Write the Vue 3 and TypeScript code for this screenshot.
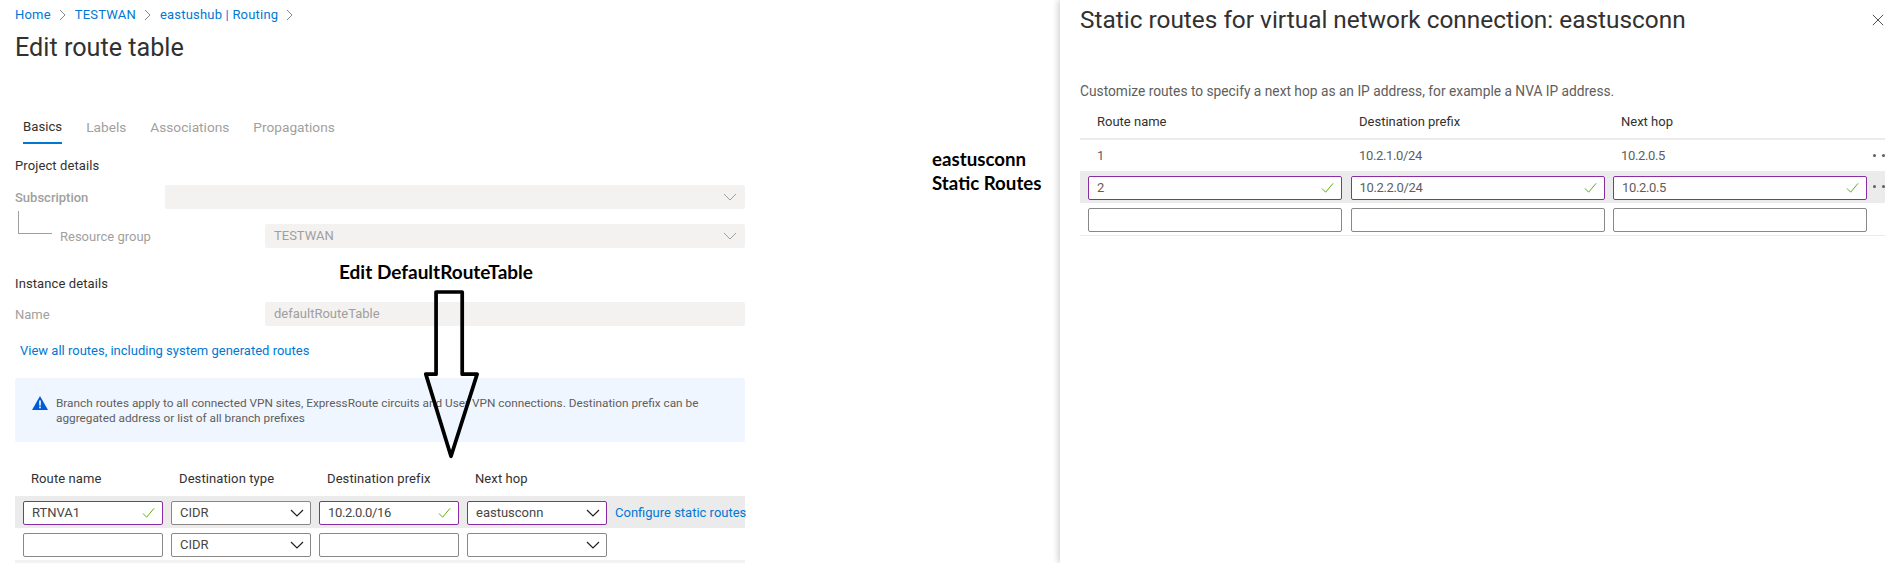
<script setup lang="ts">
const crumbs = ['Home', 'TESTWAN', 'eastushub | Routing']
const tabs = ['Basics', 'Labels', 'Associations', 'Propagations']
const routeHeads = ['Route name', 'Destination type', 'Destination prefix', 'Next hop']
const staticHeads = ['Route name', 'Destination prefix', 'Next hop']
const savedRoute = ['1', '10.2.1.0/24', '10.2.0.5']
const editedRoute = ['2', '10.2.2.0/24', '10.2.0.5']
</script>

<template>
  <div class="page">
    <main class="editor">
      <nav class="crumbs">
        <template v-for="crumb in crumbs" :key="crumb">
          <a>{{ crumb }}</a>
          <svg class="crumb-arrow" viewBox="0 0 7 12"><path d="M1 1l5 5-5 5" /></svg>
        </template>
      </nav>
      <h1>Edit route table</h1>

      <div class="tabs">
        <span v-for="(tab, i) in tabs" :key="tab" class="tab" :class="{ active: i === 0 }">{{ tab }}</span>
      </div>

      <h2 class="project">Project details</h2>
      <div class="form-row subscription">
        <label>Subscription</label>
        <div class="disabled-field">
          <svg class="chevron" viewBox="0 0 14 8"><path d="M1 1l6 6 6-6" /></svg>
        </div>
      </div>
      <div class="form-row resource">
        <label>Resource group</label>
        <div class="disabled-field">
          TESTWAN
          <svg class="chevron" viewBox="0 0 14 8"><path d="M1 1l6 6 6-6" /></svg>
        </div>
      </div>

      <h2 class="instance">Instance details</h2>
      <div class="form-row name">
        <label>Name</label>
        <div class="disabled-field">defaultRouteTable</div>
      </div>

      <a class="all-routes">View all routes, including system generated routes</a>

      <div class="info">
        <svg class="info-icon" viewBox="0 0 16 14">
          <path d="M8 0l8 14H0z" fill="#015cda" />
          <path d="M7.2 4.6h1.6v5H7.2zM7.2 10.6h1.6v1.6H7.2z" fill="#fff" />
        </svg>
        <p>
          Branch routes apply to all connected VPN sites, ExpressRoute circuits and User VPN connections. Destination
          prefix can be aggregated address or list of all branch prefixes
        </p>
      </div>

      <div class="route-head">
        <span v-for="head in routeHeads" :key="head">{{ head }}</span>
      </div>
      <div class="route-row current">
        <div class="box valid">
          RTNVA1
          <svg class="check" viewBox="0 0 14 12"><path d="M1 6.5l4 4L13 1" /></svg>
        </div>
        <div class="box">
          CIDR
          <svg class="chevron dark" viewBox="0 0 14 8"><path d="M1 1l6 6 6-6" /></svg>
        </div>
        <div class="box valid numeric">
          10.2.0.0/16
          <svg class="check" viewBox="0 0 14 12"><path d="M1 6.5l4 4L13 1" /></svg>
        </div>
        <div class="box valid">
          eastusconn
          <svg class="chevron dark" viewBox="0 0 14 8"><path d="M1 1l6 6 6-6" /></svg>
        </div>
        <a class="configure">Configure static routes</a>
      </div>
      <div class="route-row">
        <div class="box"></div>
        <div class="box">
          CIDR
          <svg class="chevron dark" viewBox="0 0 14 8"><path d="M1 1l6 6 6-6" /></svg>
        </div>
        <div class="box"></div>
        <div class="box">
          <svg class="chevron dark" viewBox="0 0 14 8"><path d="M1 1l6 6 6-6" /></svg>
        </div>
      </div>
      <div class="strip"></div>

      <strong class="note-edit">Edit DefaultRouteTable</strong>
      <svg class="big-arrow" viewBox="0 0 60 184">
        <path d="M14 2h28v88h16L30 178 3 90h11z" />
      </svg>
    </main>

    <aside class="note-static">
      <strong>eastusconn</strong>
      <strong>Static Routes</strong>
    </aside>

    <section class="panel">
      <header class="panel-head">
        <h2>Static routes for virtual network connection: eastusconn</h2>
        <svg class="close" viewBox="0 0 14 14"><path d="M1 1l12 12M13 1L1 13" /></svg>
      </header>
      <p class="hint">Customize routes to specify a next hop as an IP address, for example a NVA IP address.</p>

      <div class="static-head">
        <span v-for="head in staticHeads" :key="head">{{ head }}</span>
      </div>
      <div class="static-saved">
        <span v-for="cell in savedRoute" :key="cell">{{ cell }}</span>
        <i class="dots"></i>
      </div>
      <div class="static-row current">
        <div v-for="cell in editedRoute" :key="cell" class="box valid numeric">
          {{ cell }}
          <svg class="check" viewBox="0 0 14 12"><path d="M1 6.5l4 4L13 1" /></svg>
        </div>
        <i class="dots"></i>
      </div>
      <div class="static-row last">
        <div v-for="n in 3" :key="n" class="box"></div>
      </div>
    </section>
  </div>
</template>

<style>
html,
body {
  margin: 0;
  background: #fff;
  overflow: hidden;
}
</style>

<style scoped>
.page {
  display: flex;
  width: 1885px;
  height: 563px;
  overflow: hidden;
  color: #323130;
  font-family: Roboto, 'Liberation Sans', sans-serif;
  font-size: 13px;
}

a {
  color: #0078d4;
}

.editor {
  position: relative;
  flex: none;
  width: 730px;
  margin-left: 15px;
}

.crumbs {
  display: flex;
  align-items: center;
  gap: 8px;
  padding-top: 6px;
  letter-spacing: 0.2px;
  line-height: 18px;
}

.crumb-arrow {
  width: 7px;
  height: 12px;
  margin-right: 1px;
  fill: none;
  stroke: #8a8886;
}

h1 {
  margin: 10px 0 0;
  font-size: 25.2px;
  font-weight: 400;
  line-height: 28px;
}

.tabs {
  display: flex;
  gap: 24px;
  margin-top: 51px;
  padding-left: 8px;
}

.tab {
  padding: 5px 0 8px;
  color: #a19f9d;
  font-size: 13.7px;
  line-height: 18px;
}

.tab.active {
  padding-bottom: 6px;
  border-bottom: 2px solid #0078d4;
  color: #323130;
  font-size: 13.2px;
}

h2 {
  margin: 0;
  font-size: 13px;
  font-weight: 400;
  letter-spacing: 0.1px;
  line-height: 18px;
}

.project {
  margin-top: 13px;
}

.instance {
  margin-top: 27px;
}

.form-row {
  position: relative;
  display: flex;
  align-items: center;
  color: #a19f9d;
}

.subscription {
  margin-top: 10px;
}

.subscription label {
  width: 150px;
  font-weight: 500;
}

.resource {
  margin-top: 15px;
  padding-left: 45px;
}

.resource label {
  width: 205px;
}

.resource::before {
  content: '';
  position: absolute;
  top: -13px;
  left: 3px;
  width: 33px;
  height: 22px;
  border-left: 1px solid #a19f9d;
  border-bottom: 1px solid #a19f9d;
}

.name {
  margin-top: 9px;
}

.name label {
  width: 250px;
}

.disabled-field {
  position: relative;
  flex: 1;
  height: 24px;
  padding-left: 9px;
  border-radius: 2px;
  background: #f3f2f1;
  line-height: 24px;
}

.chevron {
  position: absolute;
  top: 8px;
  right: 8px;
  width: 14px;
  height: 8px;
  fill: none;
  stroke: #a19f9d;
}

.chevron.dark {
  top: 7px;
  right: 6px;
  stroke: #201f1e;
  stroke-width: 1.2;
}

.all-routes {
  display: block;
  margin: 16px 0 0 5px;
  line-height: 18px;
}

.info {
  display: flex;
  gap: 8px;
  height: 64px;
  box-sizing: border-box;
  margin-top: 18px;
  padding: 18px 17px 0;
  border-radius: 2px;
  background: #f0f6ff;
}

.info-icon {
  flex: none;
  width: 16px;
  height: 14px;
}

.info p {
  margin: 0;
  color: #605e5c;
  font-size: 11.8px;
  line-height: 15px;
}

.route-head {
  display: flex;
  margin-top: 28px;
  padding-left: 16px;
  letter-spacing: 0.1px;
  line-height: 18px;
}

.route-head span {
  flex: none;
  width: 148px;
}

.route-row {
  display: flex;
  gap: 8px;
  padding: 5px 8px 3px;
}

.route-row.current {
  margin-top: 8px;
  padding-right: 0;
  background: #ebebeb;
}

.box {
  position: relative;
  flex: none;
  box-sizing: border-box;
  width: 140px;
  height: 24px;
  padding-left: 8px;
  border: 1px solid #8a8886;
  border-radius: 2px;
  background: #fff;
  color: #484644;
  line-height: 22px;
}

.box.valid {
  border-color: #8a2da5;
}

.box.numeric,
.static-saved span {
  letter-spacing: -0.35px;
}

.check {
  position: absolute;
  top: 5px;
  right: 7px;
  width: 13px;
  height: 12px;
  fill: none;
  stroke: #57a300;
  stroke-width: 1;
}

.configure {
  white-space: nowrap;
  line-height: 24px;
}

.strip {
  height: 3px;
  margin-top: 0;
  background: #f3f2f1;
}

.note-edit {
  position: absolute;
  top: 262px;
  left: 324px;
  color: #000;
  font-family: Lato, sans-serif;
  font-size: 19px;
  line-height: 20px;
  white-space: nowrap;
}

.big-arrow {
  position: absolute;
  top: 286px;
  left: 408px;
  width: 56px;
  height: 180px;
  overflow: visible;
  fill: none;
  stroke: #000;
  stroke-width: 4;
  stroke-linejoin: round;
}

.note-static {
  display: flex;
  flex: none;
  flex-direction: column;
  width: 128px;
  margin-left: 187px;
  padding-top: 147px;
  color: #000;
  font-family: Lato, sans-serif;
  font-size: 18.7px;
  line-height: 24px;
  white-space: nowrap;
}

.panel {
  flex: none;
  box-sizing: border-box;
  width: 825px;
  height: 563px;
  padding-left: 20px;
  background: #fff;
  box-shadow: -2px 0 6px rgba(0, 0, 0, 0.18);
}

.panel-head {
  display: flex;
  align-items: center;
  justify-content: space-between;
  height: 40px;
  padding-right: 1px;
}

.panel-head h2 {
  font-size: 24.4px;
  font-weight: 400;
  letter-spacing: 0;
  line-height: 40px;
}

.close {
  width: 12px;
  height: 12px;
  fill: none;
  stroke: #323130;
}

.hint {
  margin: 42px 0 0;
  color: #605e5c;
  font-size: 13.75px;
  line-height: 18px;
}

.static-head,
.static-saved {
  display: flex;
  padding-left: 17px;
}

.static-head span,
.static-saved span {
  flex: none;
  width: 262px;
}

.static-head {
  height: 25px;
  margin-top: 13px;
  border-bottom: 2px solid #edebe9;
  line-height: 18px;
}

.static-saved {
  position: relative;
  align-items: center;
  height: 31px;
  color: #605e5c;
}

.static-row {
  position: relative;
  display: flex;
  gap: 8.5px;
  padding: 5px 8px 3px;
}

.static-row .box {
  width: 254px;
  color: #605e5c;
}

.static-row.current {
  background: #ebebeb;
}

.static-row.last {
  border-bottom: 1px solid #edebe9;
}

.dots {
  position: absolute;
  top: 50%;
  left: 793px;
  width: 3px;
  height: 3px;
  margin-top: -2px;
  border-radius: 50%;
  background: #605e5c;
  box-shadow: 9px 0 #605e5c;
}
</style>
